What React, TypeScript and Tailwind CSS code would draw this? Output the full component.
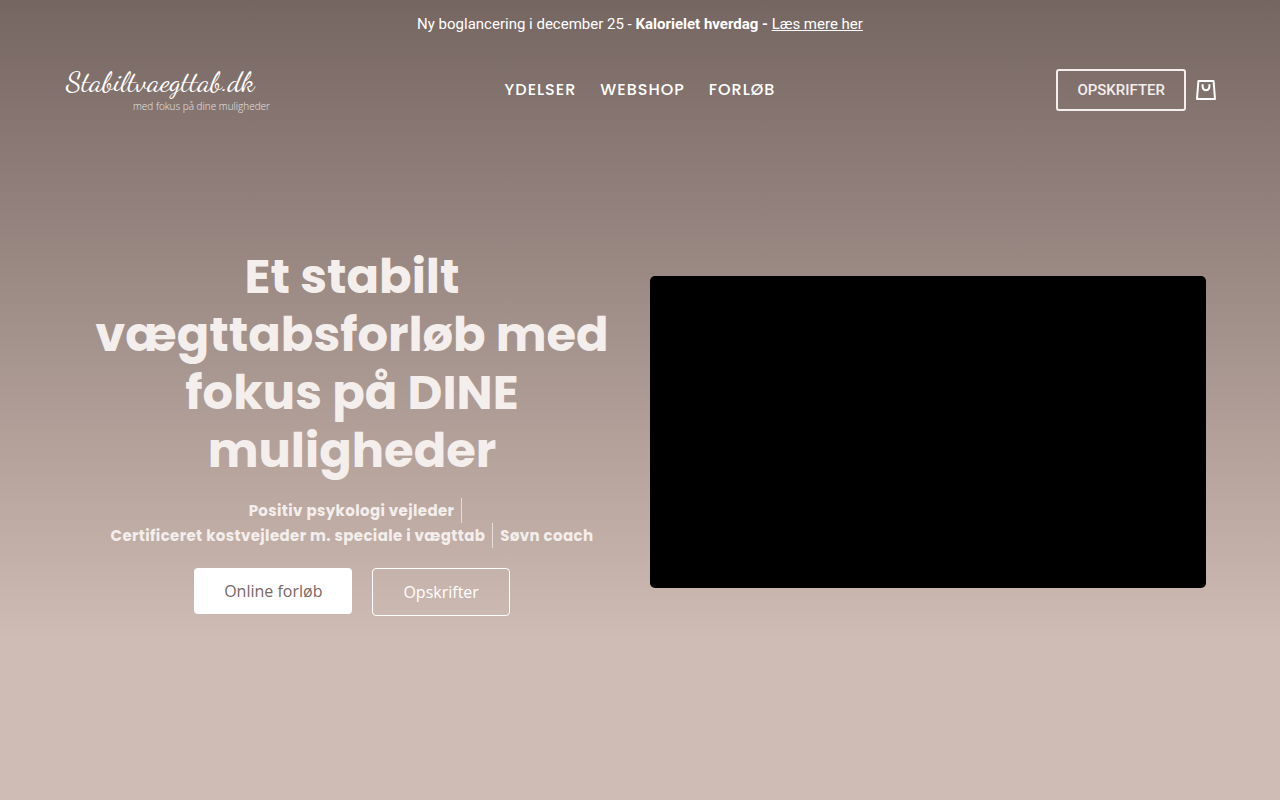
const display = "font-[Poppins,Inter,sans-serif]";

const navItems = ["Ydelser", "Webshop", "Forløb"];

function Logo() {
  return (
    <a href="#" className="flex w-[206px] flex-col text-white">
      <span className="pl-0.5 font-['Dancing_Script',Lato,sans-serif] text-[29px] leading-8">
        Stabiltvaegttab.dk
      </span>
      <span className="self-end font-['Open_Sans',sans-serif] text-[10px] leading-4 font-light text-white/80">
        med fokus på dine muligheder
      </span>
    </a>
  );
}

function BagIcon() {
  return (
    <svg viewBox="0 0 20 20" className="size-5" fill="none" stroke="currentColor" strokeWidth="2" strokeLinejoin="round" aria-hidden="true">
      <path d="M2.4 1h15.2L19 19H1Z" />
      <path d="M6.6 4.2v2.6a3.4 3.4 0 0 0 6.8 0V4.2" />
    </svg>
  );
}

function Header() {
  return (
    <header className="text-white">
      <p className="pt-3 text-center font-[Roboto,sans-serif] text-[15px] leading-6">
        Ny boglancering i december 25 - <strong className="font-bold">Kalorielet hverdag - </strong>
        <a href="#" className="underline">Læs mere her</a>
      </p>
      <div className="grid grid-cols-[1fr_auto_1fr] items-center px-16 pt-[30px]">
        <Logo />
        <nav className={`${display} flex gap-6 text-base leading-6 font-medium tracking-[1px] uppercase`}>
          {navItems.map((item) => (
            <a key={item} href="#">{item}</a>
          ))}
        </nav>
        <div className="flex items-center gap-2.5 justify-self-end">
          <a href="#" className="flex h-[42px] items-center rounded-[3px] border-2 border-[#f4eeec] px-[19px] font-[Roboto,sans-serif] text-[15px] leading-5 font-medium text-[#f4eeec] uppercase">
            Opskrifter
          </a>
          <button type="button" aria-label="Indkøbskurv"><BagIcon /></button>
        </div>
      </div>
    </header>
  );
}

function Hero() {
  return (
    <main className="mx-auto grid max-w-[1152px] grid-cols-2 items-center gap-5 px-2.5 pt-[134px]">
      <section className="text-center">
        <h1 className={`${display} text-5xl leading-[58px] font-bold text-[#f4eeec]`}>
          Et stabilt vægttabsforløb med fokus på DINE muligheder
        </h1>
        <ul className={`${display} mt-[18px] flex flex-wrap justify-center text-[15px] leading-[25px] font-bold tracking-wide text-[#f4eeec]`}>
          <li className="border-r border-white/60 px-[7px]">Positiv psykologi vejleder</li>
          <li className="border-r border-white/60 px-[7px]">Certificeret kostvejleder m. speciale i vægttab</li>
          <li className="px-[7px]">Søvn coach</li>
        </ul>
        <div className="mt-5 flex items-start justify-center gap-5 font-['Open_Sans',sans-serif] text-base leading-[22px]">
          <a href="#" className="rounded-[4px] bg-white px-[30px] py-3 text-[#776763]">Online forløb</a>
          <a href="#" className="rounded-[4px] border border-white px-[30px] py-3 text-white">Opskrifter</a>
        </div>
      </section>
      <video className="h-[312px] w-full rounded-[5px] bg-black" aria-label="Introduktionsvideo" />
    </main>
  );
}

export default function App() {
  return (
    <div className="min-h-screen bg-linear-to-b from-[#766662] to-[#cfbcb4] to-80%">
      <Header />
      <Hero />
    </div>
  );
}
